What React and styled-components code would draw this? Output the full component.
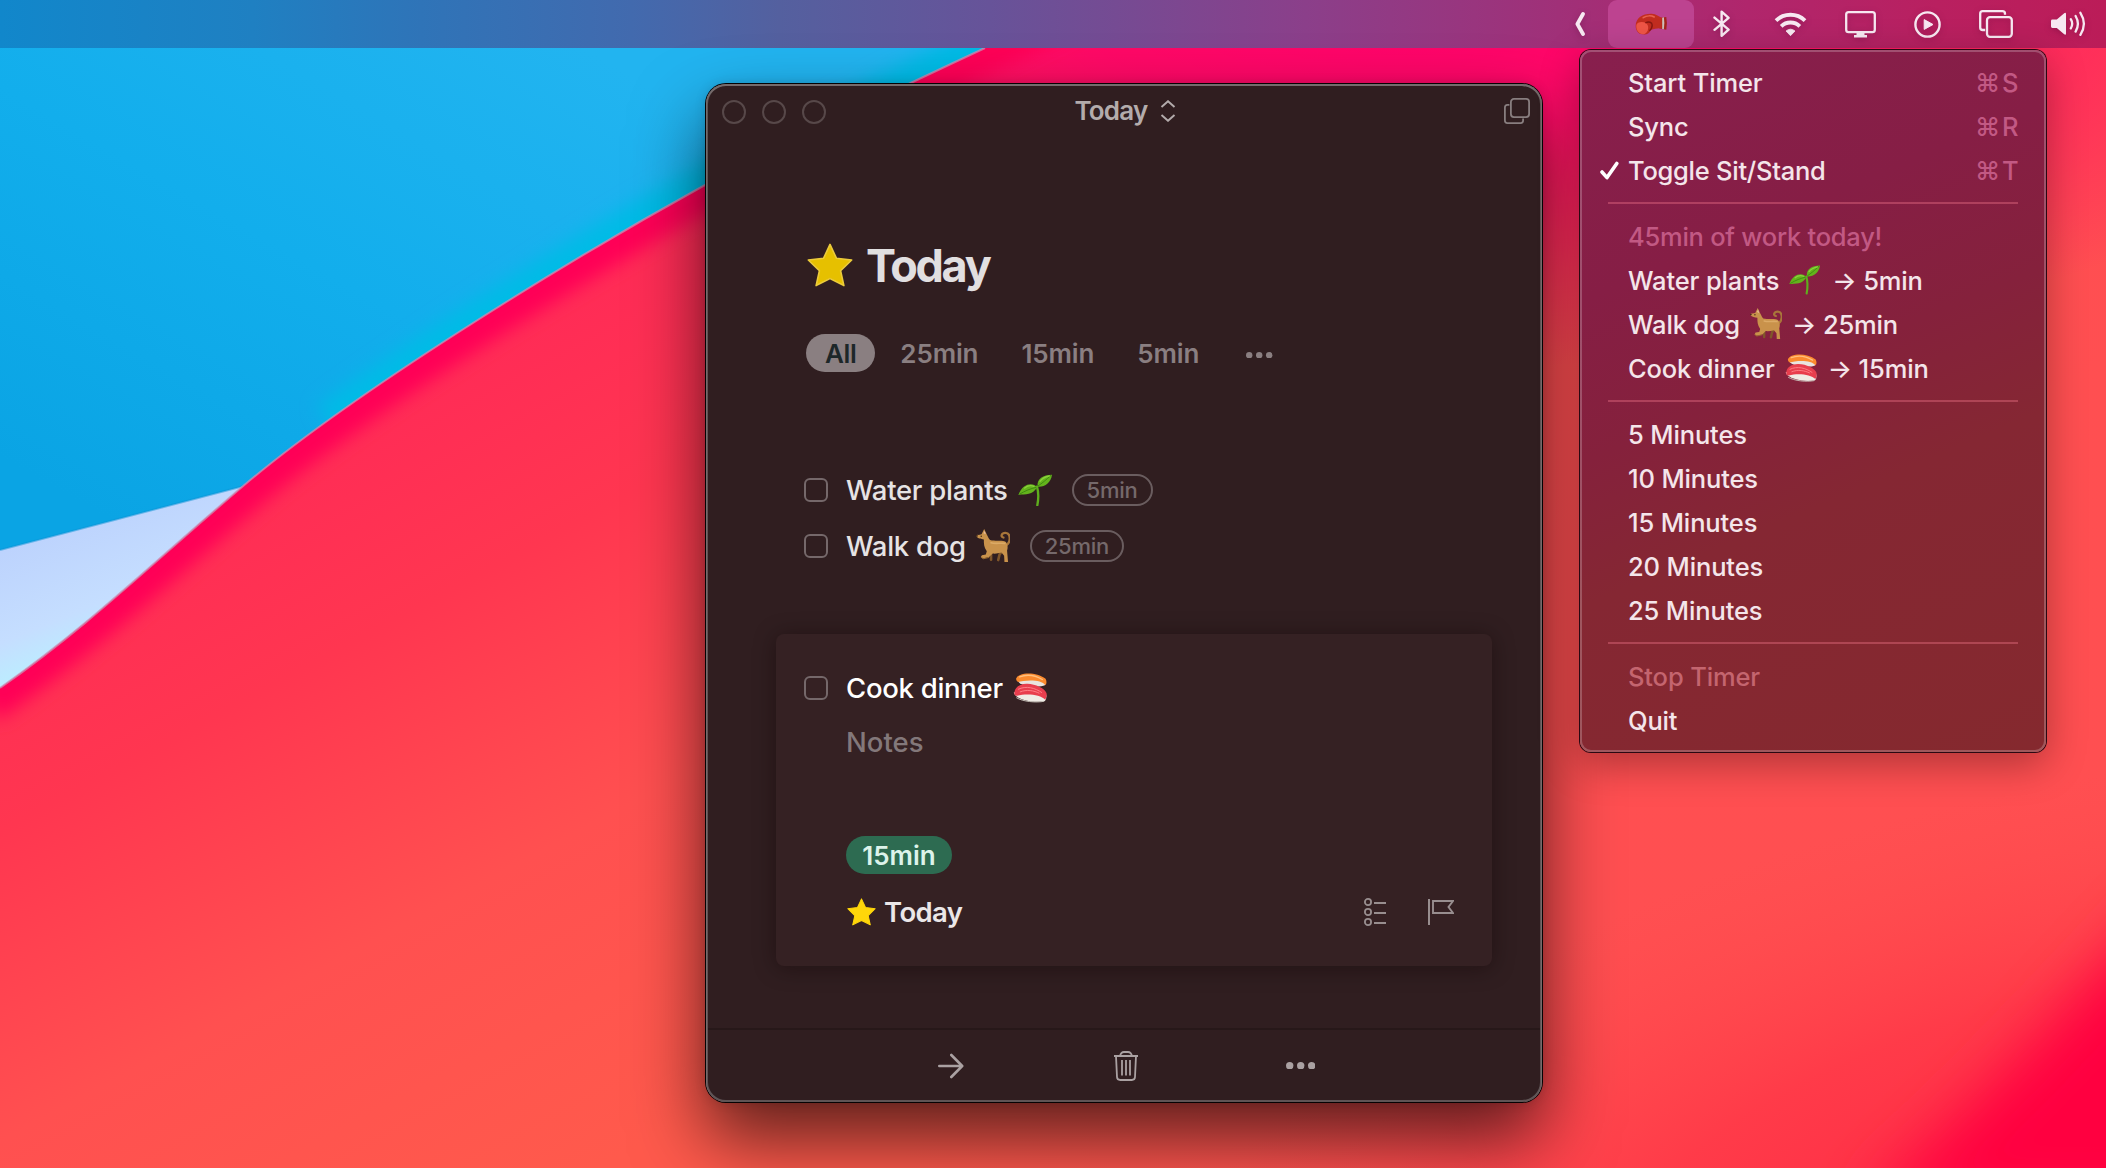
import React from "react";
import styled, { createGlobalStyle } from "styled-components";

const GlobalStyle = createGlobalStyle`
  *, *::before, *::after { box-sizing: border-box; }
  body { margin: 0; overflow: hidden; }
  svg { display: block; flex: none; }
`;

const Desktop = styled.div`
  position: relative;
  width: 2106px;
  height: 1168px;
  overflow: hidden;
  font-family: Inter, "Liberation Sans", sans-serif;
  color: #f3e6ea;
`;

const Backdrop = styled.svg`
  position: absolute;
  inset: 0;
`;

/* ---------- menu bar ---------- */

const MenuBar = styled.header`
  position: relative;
  display: flex;
  justify-content: flex-end;
  align-items: stretch;
  height: 48px;
  padding-right: 1px;
  background: linear-gradient(90deg, #1187cb 0%, #1f80c2 12%, #2f74b8 20%, #426aae 30%, #54609f 37%, #675399 47%, #8b3f8a 62%, #a03078 74%, #b0266c 83%, #b92060 92%, #bb1c58 100%);
`;

const StatusItem = styled.div`
  display: flex;
  align-items: center;
  padding: 0 ${(p) => p.$right ?? 19}px 0 19px;
  color: #f7e8f1;
  filter: drop-shadow(0 2px 3px rgba(60, 0, 40, 0.25));
`;

const ActiveStatusItem = styled.div`
  display: flex;
  align-items: center;
  justify-content: center;
  width: 86px;
  border-radius: 9px;
  background: #bd4390;
`;

/* ---------- drop-down menu ---------- */

const Menu = styled.nav`
  position: absolute;
  left: 1580px;
  top: 50px;
  width: 466px;
  height: 702px;
  padding: 10px 0;
  border-radius: 11px;
  background: linear-gradient(157deg, #881f4e 0%, #861e45 28%, #85213c 46%, #852733 62%, #85292e 100%);
  box-shadow: inset 0 0 0 2px rgba(255, 255, 255, 0.22), 0 0 0 1px #2a0812, 0 12px 40px rgba(0, 0, 0, 0.32);
`;

const MenuRow = styled.div`
  display: flex;
  align-items: center;
  height: 44px;
  padding: 0 28px 0 20px;
  font-size: 25.5px;
  font-weight: 500;
  letter-spacing: ${(p) => p.$tracking ?? -0.14}px;
  white-space: pre;
  color: ${(p) => (p.$dim ? p.$dim : "#f4e5ea")};
`;

const CheckSlot = styled.div`
  width: 28px;
  flex: none;
`;

const MenuEmoji = styled.span`
  display: flex;
  margin: 0 ${(p) => p.$after ?? 10}px 0 10px;
`;

const Shortcut = styled.span`
  display: grid;
  grid-template-columns: 27px 16px;
  margin-left: auto;
  color: #c25984;
`;

const MenuDivider = styled.div`
  height: 2px;
  margin: 10px 28px;
  background: rgba(255, 130, 150, 0.34);
`;

/* ---------- task window ---------- */

const Window = styled.section`
  position: absolute;
  left: 706px;
  top: 84px;
  display: flex;
  flex-direction: column;
  width: 836px;
  height: 1018px;
  padding: 2px;
  border-radius: 20px;
  background: #301e20;
  box-shadow: inset 0 1px 0 1px #756b6c, inset 0 0 0 2px #5f5455, 0 0 0 1px #050203, 0 36px 72px rgba(0, 0, 0, 0.64), 0 0 12px rgba(0, 0, 0, 0.15);
`;

const TitleBar = styled.div`
  display: grid;
  grid-template-columns: 1fr auto 1fr;
  align-items: center;
  height: 52px;
  padding: 0 10px 0 14px;
`;

const TrafficLights = styled.div`
  display: flex;
  gap: 16px;
`;

const Light = styled.span`
  width: 24px;
  height: 24px;
  border: 2px solid #574849;
  border-radius: 50%;
`;

const WindowTitle = styled.div`
  display: flex;
  align-items: center;
  gap: 12px;
  padding: 0 2px 3px 0;
  font-size: 26px;
  font-weight: 600;
  letter-spacing: -0.75px;
  color: #b3acac;
`;

const TitleAction = styled.div`
  justify-self: end;
  padding-bottom: 2px;
`;

const Content = styled.div`
  flex: 1;
  display: flex;
  flex-direction: column;
  padding: 97px 48px 0 96px;
`;

const Heading = styled.h1`
  display: flex;
  align-items: center;
  gap: 13px;
  height: 60px;
  margin: 0 0 0 3px;
  font-size: 45px;
  font-weight: 680;
  letter-spacing: -2.3px;
  color: #e1dfe0;
`;

const Filters = styled.div`
  display: flex;
  align-items: center;
  gap: 7px;
  height: 38px;
  margin: 39px 0 0 2px;
`;

const Filter = styled.span`
  display: flex;
  align-items: center;
  justify-content: center;
  height: 38px;
  padding: 0 ${(p) => (p.$active ? 19 : 18)}px;
  border-radius: 19px;
  font-size: 26px;
  font-weight: 600;
  letter-spacing: ${(p) => (p.$active ? -0.4 : -0.12)}px;
  color: ${(p) => (p.$active ? "#1d2729" : "#8a7f81")};
  background: ${(p) => (p.$active ? "#8a7f81" : "transparent")};
`;

const MoreFilters = styled.span`
  padding: 4px 0 0 22px;
`;

const TaskList = styled.div`
  margin-top: 90px;
`;

const TaskRow = styled.div`
  display: flex;
  align-items: center;
  height: 56px;
`;

const Checkbox = styled.span`
  width: 24px;
  height: 24px;
  margin-right: 18px;
  border: 2px solid #75686a;
  border-radius: 6px;
`;

const TaskTitle = styled.span`
  margin-right: 10px;
  font-size: 27.5px;
  font-weight: 500;
  letter-spacing: -0.28px;
  color: ${(p) => (p.$bright ? "#ffffff" : "#e6e3e4")};
`;

const Tag = styled.span`
  display: flex;
  align-items: center;
  justify-content: center;
  height: 32px;
  padding: 0 13px;
  margin-left: 20px;
  border: 2px solid #6a5d5f;
  border-radius: 16px;
  font-size: 22px;
  font-weight: 500;
  letter-spacing: -0.25px;
  color: #75696b;
`;

const Card = styled.article`
  width: 716px;
  height: 332px;
  margin: 60px 0 0 -28px;
  padding: 26px 38px 0 28px;
  border-radius: 8px;
  background: #352123;
  box-shadow: 0 2px 22px rgba(15, 5, 5, 0.42);
`;

const CardBody = styled.div`
  padding-left: 42px;
`;

const Notes = styled.div`
  height: 52px;
  line-height: 52px;
  font-size: 27.5px;
  font-weight: 450;
  color: #83787a;
`;

const DurationTag = styled.div`
  display: flex;
  align-items: center;
  justify-content: center;
  width: 106px;
  height: 38px;
  margin-top: 68px;
  border-radius: 19px;
  font-size: 26px;
  font-weight: 600;
  color: #dcf3ea;
  background: #2d6b51;
`;

const CardFooter = styled.div`
  display: flex;
  align-items: center;
  height: 56px;
  margin-top: 10px;
  padding-left: 1px;
`;

const ListName = styled.span`
  margin: 0 auto 0 8px;
  font-size: 27.5px;
  font-weight: 580;
  letter-spacing: -0.6px;
  color: #ebe7e8;
`;

const CardTools = styled.div`
  display: flex;
  align-items: center;
  gap: 42px;
`;

const BottomBar = styled.footer`
  display: flex;
  justify-content: center;
  height: 72px;
  padding: 1px 0 0 3px;
  border-top: 2px solid #271819;
`;

const BarButton = styled.span`
  display: flex;
  align-items: center;
  justify-content: center;
  width: 175px;
`;

/* ---------- drawings ---------- */

const Wallpaper = () => (
  <Backdrop width="2106" height="1168" viewBox="0 0 2106 1168">
    <defs>
      <linearGradient id="sky" gradientUnits="userSpaceOnUse" x1="500" y1="0" x2="180" y2="560">
        <stop offset="0" stopColor="#22b4f0" />
        <stop offset="0.5" stopColor="#12aeec" />
        <stop offset="1" stopColor="#0aa4e4" />
      </linearGradient>
      <linearGradient id="ice" gradientUnits="userSpaceOnUse" x1="60" y1="520" x2="110" y2="640">
        <stop offset="0" stopColor="#bcd2fd" />
        <stop offset="0.7" stopColor="#c5deff" />
        <stop offset="1" stopColor="#bcecff" />
      </linearGradient>
      <linearGradient id="coral" gradientUnits="userSpaceOnUse" x1="420" y1="350" x2="800" y2="1060">
        <stop offset="0" stopColor="#ff2a57" />
        <stop offset="0.28" stopColor="#ff3650" />
        <stop offset="0.62" stopColor="#ff5050" />
        <stop offset="1" stopColor="#ff5a4c" />
      </linearGradient>
      <radialGradient id="glow" gradientUnits="userSpaceOnUse" cx="0" cy="0" r="1" gradientTransform="translate(1420 0) scale(980 370)">
        <stop offset="0" stopColor="#ff006c" />
        <stop offset="0.35" stopColor="#ff006a" stopOpacity="0.85" />
        <stop offset="1" stopColor="#ff0064" stopOpacity="0" />
      </radialGradient>
      <linearGradient id="warm" gradientUnits="userSpaceOnUse" x1="900" y1="0" x2="1500" y2="0">
        <stop offset="0" stopColor="#ff4d52" stopOpacity="0" />
        <stop offset="1" stopColor="#ff4d52" stopOpacity="0.85" />
      </linearGradient>
      <radialGradient id="shade" gradientUnits="userSpaceOnUse" cx="0" cy="0" r="1" gradientTransform="translate(2106 1200) rotate(-12) scale(1000 420)">
        <stop offset="0" stopColor="#ff2446" />
        <stop offset="0.5" stopColor="#ff3446" stopOpacity="0.75" />
        <stop offset="1" stopColor="#ff4a4a" stopOpacity="0" />
      </radialGradient>
      <clipPath id="skyArea">
        <path d="M0 0 H1100 V60 L260 482 L244 486 L0 550Z" />
      </clipPath>
      <clipPath id="redArea">
        <path d="M0 688 C90 625 150 565 242 487 C350 395 560 265 705 185 C790 140 880 97 985 48 L1085 0 H2106 V1168 H0Z" />
      </clipPath>
      <filter id="soft8" x="-10%" y="-10%" width="120%" height="120%"><feGaussianBlur stdDeviation="9" /></filter>
      <filter id="soft30" x="-40%" y="-40%" width="180%" height="180%"><feGaussianBlur stdDeviation="30" /></filter>
    </defs>
    <rect width="2106" height="1168" fill="url(#sky)" />
    <g clipPath="url(#skyArea)">
      <path d="M330 424 C420 355 590 250 705 185 C790 140 880 97 1000 40" fill="none" stroke="#00bbe6" strokeWidth="42" filter="url(#soft8)" />
    </g>
    <path d="M0 550 L244 486 L150 640 L0 700Z" fill="url(#ice)" />
    <path d="M0 550 L244 486" stroke="#0b93d6" strokeOpacity="0.5" strokeWidth="2" />
    <g clipPath="url(#redArea)">
      <rect width="2106" height="1168" fill="url(#coral)" />
      <rect x="900" width="1206" height="1168" fill="url(#warm)" />
      <rect width="2106" height="500" fill="url(#glow)" />
      <path d="M-20 694 C90 617 150 557 242 479 C350 387 560 257 705 177 C790 132 880 89 985 40 L1085 -8" fill="none" stroke="#ff0056" strokeWidth="64" filter="url(#soft8)" />
      <rect x="900" y="600" width="1206" height="568" fill="url(#shade)" />
      <path d="M2180 890 C2080 990 2010 1080 1860 1210 H2200Z" fill="#ff0040" filter="url(#soft30)" />
    </g>
    <path d="M0 688 C90 625 150 565 242 487 C350 395 560 265 705 185 C790 140 880 97 985 48" fill="none" stroke="#c98fb4" strokeOpacity="0.75" strokeWidth="2" />
  </Backdrop>
);

const Seedling = ({ width }) => (
  <svg width={width} height={width * 0.94} viewBox="0 0 102 96" role="img" aria-label="seedling">
    <path d="M57 38 C62 55 62 74 58 94" fill="none" stroke="#5fae1e" strokeWidth="7" strokeLinecap="round" />
    <path d="M59 38 C55 14 76 2 102 2 C99 26 80 40 59 38Z" fill="#63b31c" />
    <path d="M57 40 C46 24 14 26 1 63 C22 60 45 64 57 40Z" fill="#63b31c" />
    <path d="M60 36 C72 28 84 18 99 4 M55 40 C38 44 22 50 4 61" fill="none" stroke="#3f8a10" strokeWidth="3" />
    <path d="M66 22 C73 12 84 8 94 6 M20 42 C30 34 40 34 48 37" fill="none" stroke="#8bd13c" strokeWidth="4" strokeLinecap="round" />
  </svg>
);

const Dog = ({ width }) => (
  <svg width={width} height={width} viewBox="0 0 104 104" role="img" aria-label="dog">
    <path d="M92 50 C108 40 106 12 90 12 C78 12 74 24 84 26" fill="none" stroke="#a8763a" strokeWidth="7" strokeLinecap="round" />
    <path d="M46 66 L46 94 M84 64 L72 78 L68 95" fill="none" stroke="#80562a" strokeWidth="8" strokeLinecap="round" strokeLinejoin="round" />
    <path d="M17 16 L25 0 L33 17 C38 26 39 30 43 34 C58 38 74 34 89 38 C98 44 98 58 95 66 L98 101 L87 101 L86 82 L78 72 C68 75 58 76 51 75 L40 86 L22 90 L15 86 L18 80 L30 78 L33 68 C24 56 24 44 24 32 C16 30 6 30 1 22 Q2 17 8 18 Z" fill="#c9924b" strokeLinejoin="round" />
    <path d="M15 86 L22 91 L40 87" fill="none" stroke="#9a6a30" strokeWidth="3" />
    <path d="M46 42 C58 46 74 42 88 44" fill="none" stroke="#dcaa66" strokeWidth="5" strokeLinecap="round" />
    <path d="M23 13 L26 5 L30 16Z" fill="#e7b9a0" />
    <circle cx="3" cy="21" r="2.6" fill="#3b2414" />
    <circle cx="16" cy="22" r="2.2" fill="#3b2414" />
  </svg>
);

const Sushi = ({ width }) => (
  <svg width={width} height={width * 0.86} viewBox="0 0 104 90" role="img" aria-label="sushi">
    <path d="M13 22 C20 42 80 46 98 38 L100 24 L60 10Z" fill="#e9e4df" />
    <path d="M9 18 C14 -2 70 -6 100 18 Q106 30 99 38 C88 18 34 22 15 28 Q9 24 9 18Z" fill="#fb8a2e" />
    <path d="M20 12 C40 4 66 6 90 20" fill="none" stroke="#ffc07e" strokeWidth="4" strokeLinecap="round" />
    <path d="M2 60 C6 82 66 94 98 86 Q104 80 102 66 L50 50Z" fill="#f0ece6" />
    <path d="M4 66 C2 44 22 32 44 33 C70 34 96 46 103 62 Q104 76 99 82 C84 66 42 62 12 70 Q5 70 4 66Z" fill="#e83e4e" />
    <path d="M16 50 C40 38 68 46 88 60 M22 58 C42 50 64 54 80 62" fill="none" stroke="#ff8088" strokeWidth="3" strokeLinecap="round" />
    <path d="M10 76 C30 88 70 92 96 87" fill="none" stroke="#c9c2ba" strokeWidth="3" />
  </svg>
);

const Star = ({ width, fill, edge }) => (
  <svg width={width} height={width * 0.95} viewBox="0 0 46 43.7" role="img" aria-label="star">
    <path
      d="M23 1.4 L29.4 15.2 L44.7 17 L33.6 27.8 L36.9 42.6 L23 35.6 L9.1 42.6 L12.4 27.8 L1.3 17 L16.6 15.2Z"
      fill={fill}
      stroke={edge}
      strokeWidth="1.6"
      strokeLinejoin="round"
    />
  </svg>
);

const BoxingGlove = () => (
  <svg width="33" height="22" viewBox="0 0 96 66" preserveAspectRatio="none" role="img" aria-label="boxing glove">
    <path d="M68 15 L91 12 Q95 32 91 50 L70 46Z" fill="#a3241d" />
    <path d="M79 14 L84 13 Q87 32 84 49 L79 48Z" fill="#cfc0bb" />
    <path d="M2 38 C2 14 24 1 48 2 C62 3 70 10 78 15 L78 46 C66 44 58 48 46 50 C42 62 32 66 22 64 C8 62 2 52 2 38Z" fill="#c22d20" />
    <path d="M4 36 C6 26 22 24 32 30 C42 38 40 56 28 63 C12 66 2 52 4 36Z" fill="#ee5546" />
    <path d="M30 30 C40 24 50 28 50 36 C50 44 46 50 42 53" fill="none" stroke="#861811" strokeWidth="4" />
    <path d="M24 14 C34 7 48 8 56 12" fill="none" stroke="#e8604f" strokeWidth="5" strokeLinecap="round" />
  </svg>
);

const BackChevron = () => (
  <svg width="10" height="24" viewBox="0 0 10 24">
    <path d="M8 2 L2.4 12 L8 22" fill="none" stroke="currentColor" strokeWidth="3.8" strokeLinecap="round" strokeLinejoin="round" />
  </svg>
);

const Bluetooth = () => (
  <svg width="23" height="28" viewBox="0 0 23 28">
    <path d="M1.5 7.6 L15.6 19.6 L8.6 25.8 V1.6 L15.6 7.8 L1.5 19.8" fill="none" stroke="currentColor" strokeWidth="2.4" strokeLinejoin="round" strokeLinecap="round" />
  </svg>
);

const Wifi = () => (
  <svg width="33" height="25" viewBox="0 0 33 25">
    <path d="M2 8.6 A21 21 0 0 1 31 8.6" fill="none" stroke="currentColor" strokeWidth="3.9" />
    <path d="M7.2 14.3 A13.4 13.4 0 0 1 25.8 14.3" fill="none" stroke="currentColor" strokeWidth="3.9" />
    <path d="M12 19 Q16.5 15.4 21 19 L16.5 23.7Z" fill="currentColor" stroke="currentColor" strokeWidth="0.8" strokeLinejoin="round" />
  </svg>
);

const Display = () => (
  <svg width="31" height="27" viewBox="0 0 31 27">
    <rect x="1.2" y="1.2" width="28.6" height="20" rx="2.4" fill="none" stroke="currentColor" strokeWidth="2.3" />
    <path d="M11.5 21 H19.5 V24 H22 V26.6 H9 V24 H11.5Z" fill="currentColor" />
  </svg>
);

const PlayCircle = () => (
  <svg width="27" height="27" viewBox="0 0 27 27">
    <circle cx="13.5" cy="13.5" r="12.1" fill="none" stroke="currentColor" strokeWidth="2.4" />
    <path d="M10.2 8.6 L19 13.5 L10.2 18.4Z" fill="currentColor" stroke="currentColor" strokeWidth="1" strokeLinejoin="round" />
  </svg>
);

const Displays = () => (
  <svg width="34" height="28" viewBox="0 0 34 28">
    <path d="M6.2 20 H3.8 Q1.2 20 1.2 17.4 V3.8 Q1.2 1.2 3.8 1.2 H23.4 Q26 1.2 26 3.8 V4.8" fill="none" stroke="currentColor" strokeWidth="2.3" />
    <rect x="8" y="7.2" width="24.8" height="19.6" rx="3" fill="none" stroke="currentColor" strokeWidth="2.3" />
  </svg>
);

const Volume = () => (
  <svg width="35" height="26" viewBox="0 0 35 26">
    <path d="M1.4 8.6 H5.8 L13.2 2.2 Q15 1.2 15 3 V22.4 Q15 24.4 13.2 23.2 L5.8 17 H1.4 Q0 17 0 15.6 V10 Q0 8.6 1.4 8.6Z" fill="currentColor" />
    <path d="M19.8 8.2 Q22.6 12.8 19.8 17.4 M24.6 5 Q29.2 12.8 24.6 20.6 M29.4 1.8 Q36.4 12.8 29.4 23.8" fill="none" stroke="currentColor" strokeWidth="2.3" strokeLinecap="round" />
  </svg>
);

const Check = () => (
  <svg width="19" height="19" viewBox="0 0 19 19">
    <path d="M2 11 L7 16.6 L16.8 2.4" fill="none" stroke="#fff" strokeWidth="3.6" strokeLinecap="round" strokeLinejoin="round" />
  </svg>
);

const SortChevrons = () => (
  <svg width="16" height="22" viewBox="0 0 16 22">
    <path d="M1.5 7 L8 1.2 L14.5 7 M1.5 15 L8 20.8 L14.5 15" fill="none" stroke="#b3acac" strokeWidth="1.9" />
  </svg>
);

const NewWindow = () => (
  <svg width="26" height="26" viewBox="0 0 26 26">
    <rect x="6.9" y="0.9" width="18.2" height="18.2" rx="3" fill="none" stroke="#887e7f" strokeWidth="1.8" />
    <path d="M5.4 6.9 H3.4 Q0.9 6.9 0.9 9.4 V22.6 Q0.9 25.1 3.4 25.1 H16.6 Q19.1 25.1 19.1 22.6 V20.6" fill="none" stroke="#887e7f" strokeWidth="1.8" />
  </svg>
);

const Dots = ({ radius, pitch, fill }) => {
  const size = radius * 2;
  return (
    <svg width={pitch * 2 + size} height={size} viewBox={`0 0 ${pitch * 2 + size} ${size}`}>
      {[0, 1, 2].map((i) => (
        <circle key={i} cx={radius + i * pitch} cy={radius} r={radius} fill={fill} />
      ))}
    </svg>
  );
};

const Checklist = () => (
  <svg width="22" height="28" viewBox="0 0 22 28">
    {[4, 14, 24].map((y) => (
      <g key={y} fill="none" stroke="#988e8f">
        <circle cx="4" cy={y} r="3.1" strokeWidth="1.8" />
        <path d={`M10 ${y + 1} H22`} strokeWidth="2" />
      </g>
    ))}
  </svg>
);

const Flag = () => (
  <svg width="26" height="26" viewBox="0 0 26 26">
    <path d="M1 0 V26" stroke="#988e8f" strokeWidth="2" />
    <path d="M5 2 H25 L20.5 8 L25 14 H5Z" fill="none" stroke="#988e8f" strokeWidth="1.9" />
  </svg>
);

const ArrowRight = () => (
  <svg width="26" height="26" viewBox="0 0 26 26">
    <path d="M1.3 13 H24 M13.3 2 L24.2 13 L13.3 24" fill="none" stroke="#aaa1a2" strokeWidth="2.6" strokeLinecap="round" strokeLinejoin="round" />
  </svg>
);

const Trash = () => (
  <svg width="24" height="30" viewBox="0 0 24 30">
    <path d="M0 5 H24" stroke="#aaa1a2" strokeWidth="2" />
    <path d="M6 5 Q7 1 10 1 H14 Q17 1 18 5 M2 5 L3 26 Q3.2 29 6.2 29 H17.8 Q20.8 29 21 26 L22 5" fill="none" stroke="#aaa1a2" strokeWidth="1.8" />
    <path d="M8 9 V24.5 M12 9 V24.5 M16 9 V24.5" stroke="#aaa1a2" strokeWidth="1.8" />
  </svg>
);

/* ---------- parts ---------- */

const Item = ({ children, checked, keys, dim, tracking }) => (
  <MenuRow $dim={dim} $tracking={tracking}>
    <CheckSlot>{checked && <Check />}</CheckSlot>
    {children}
    {keys && (
      <Shortcut>
        <span>⌘</span>
        <span>{keys}</span>
      </Shortcut>
    )}
  </MenuRow>
);

const TaskItem = ({ title, icon, tag, bright }) => (
  <TaskRow>
    <Checkbox />
    <TaskTitle $bright={bright}>{title}</TaskTitle>
    {icon}
    {tag && <Tag>{tag}</Tag>}
  </TaskRow>
);

export default function App() {
  return (
    <Desktop>
      <GlobalStyle />
      <Wallpaper />

      <MenuBar>
        <StatusItem $right={23}><BackChevron /></StatusItem>
        <ActiveStatusItem><BoxingGlove /></ActiveStatusItem>
        <StatusItem><Bluetooth /></StatusItem>
        <StatusItem><Wifi /></StatusItem>
        <StatusItem><Display /></StatusItem>
        <StatusItem><PlayCircle /></StatusItem>
        <StatusItem><Displays /></StatusItem>
        <StatusItem><Volume /></StatusItem>
      </MenuBar>

      <Window>
        <TitleBar>
          <TrafficLights><Light /><Light /><Light /></TrafficLights>
          <WindowTitle>Today<SortChevrons /></WindowTitle>
          <TitleAction><NewWindow /></TitleAction>
        </TitleBar>
        <Content>
          <Heading><Star width={46} fill="#e6c000" edge="#ebcb3c" />Today</Heading>
          <Filters>
            <Filter $active>All</Filter>
            <Filter>25min</Filter>
            <Filter>15min</Filter>
            <Filter>5min</Filter>
            <MoreFilters><Dots radius={3.2} pitch={10} fill="#8a7f81" /></MoreFilters>
          </Filters>
          <TaskList>
            <TaskItem title="Water plants" icon={<Seedling width={34} />} tag="5min" />
            <TaskItem title="Walk dog" icon={<Dog width={34} />} tag="25min" />
          </TaskList>
          <Card>
            <TaskItem title="Cook dinner" icon={<Sushi width={34} />} bright />
            <CardBody>
              <Notes>Notes</Notes>
              <DurationTag>15min</DurationTag>
              <CardFooter>
                <Star width={29} fill="#ffd60a" edge="#ffd60a" />
                <ListName>Today</ListName>
                <CardTools><Checklist /><Flag /></CardTools>
              </CardFooter>
            </CardBody>
          </Card>
        </Content>
        <BottomBar>
          <BarButton><ArrowRight /></BarButton>
          <BarButton><Trash /></BarButton>
          <BarButton><Dots radius={3.7} pitch={11} fill="#aaa1a2" /></BarButton>
        </BottomBar>
      </Window>

      <Menu>
        <Item keys="S">Start Timer</Item>
        <Item keys="R">Sync</Item>
        <Item keys="T" checked tracking={-0.26}>Toggle Sit/Stand</Item>
        <MenuDivider />
        <Item dim="#c25984" tracking={-0.25}>45min of work today!</Item>
        <Item>Water plants<MenuEmoji $after={12}><Seedling width={31} /></MenuEmoji>→ 5min</Item>
        <Item>Walk dog<MenuEmoji><Dog width={32} /></MenuEmoji>→ 25min</Item>
        <Item>Cook dinner<MenuEmoji $after={11}><Sushi width={32} /></MenuEmoji>→ 15min</Item>
        <MenuDivider />
        <Item>5 Minutes</Item>
        <Item>10 Minutes</Item>
        <Item>15 Minutes</Item>
        <Item>20 Minutes</Item>
        <Item>25 Minutes</Item>
        <MenuDivider />
        <Item dim="#c4656f">Stop Timer</Item>
        <Item tracking={-0.2}>Quit</Item>
      </Menu>
    </Desktop>
  );
}
